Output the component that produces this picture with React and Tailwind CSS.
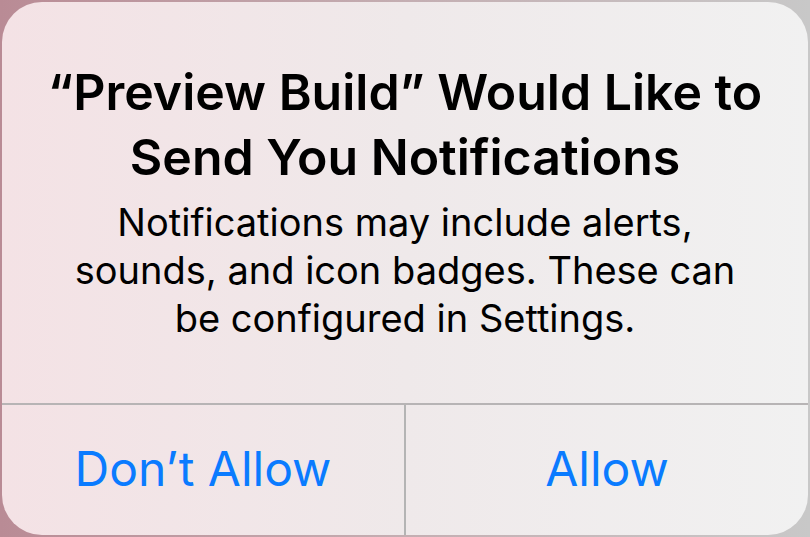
export default function App() {
  return (
    <div className="w-[810px] h-[537px] bg-gradient-to-r from-[#b98b95] via-[#c4aeb2] to-[#c8c8c8] p-[2px]">
      <div
        className="w-full h-full rounded-[40px] bg-gradient-to-r from-[#f4e2e5] via-[#efe9ea] to-[#f1f1f1] flex flex-col overflow-hidden"
        style={{ fontFamily: 'Inter, "Noto Sans", sans-serif' }}
      >
        <div className="flex-1 flex flex-col items-center pt-[58px] px-2">
          <h1 className="text-[50px] leading-[65px] font-semibold text-black text-center whitespace-nowrap">
            “Preview Build” Would Like to
            <br />
            Send You Notifications
          </h1>
          <p className="mt-[8px] text-[38px] leading-[48px] text-black text-center whitespace-nowrap">
            Notifications may include alerts,
            <br />
            sounds, and icon badges. These can
            <br />
            be configured in Settings.
          </p>
        </div>
        <div className="h-[132px] flex border-t-2 border-[#b7b4b5]">
          <button className="flex-1 flex items-center justify-center text-[48px] text-[#0a7bff] pb-[2px]">
            Don’t Allow
          </button>
          <div className="w-[2px] bg-[#b4b4b4]" />
          <button className="flex-1 flex items-center justify-center text-[48px] text-[#0a7bff] pb-[2px]">
            Allow
          </button>
        </div>
      </div>
    </div>
  )
}
